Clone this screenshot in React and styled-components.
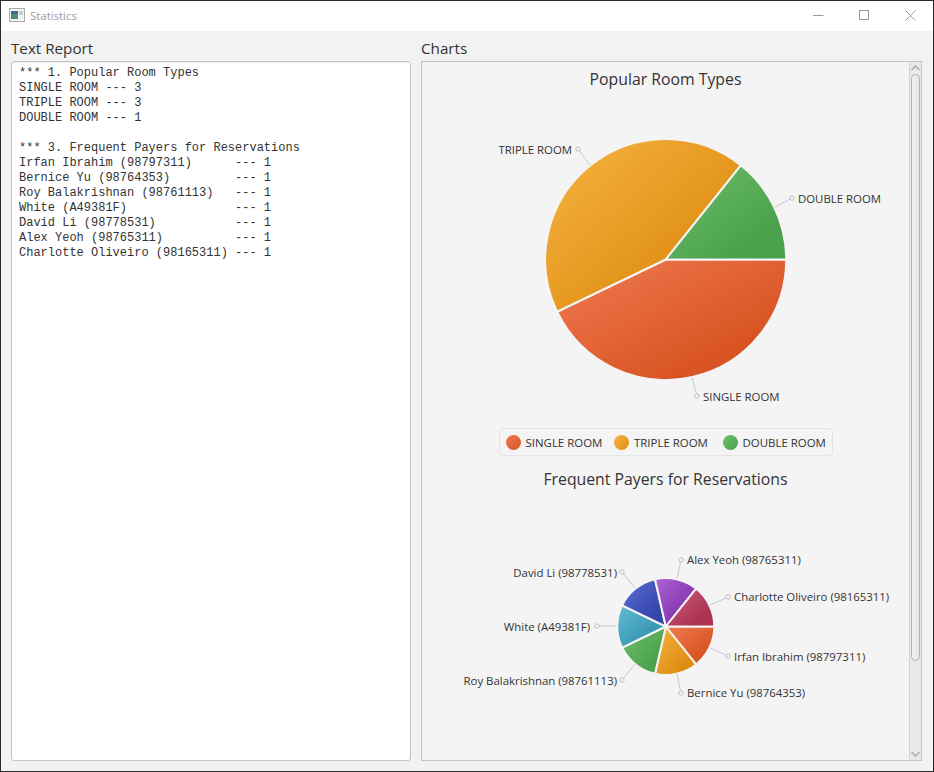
import styled, { createGlobalStyle } from 'styled-components';

const GlobalStyle = createGlobalStyle`
  html, body { margin: 0; padding: 0; background: #f4f4f4; }
  * { box-sizing: border-box; }
`;

const UI_FONT = '"Open Sans", "Noto Sans", sans-serif';

const report = `*** 1. Popular Room Types
SINGLE ROOM --- 3
TRIPLE ROOM --- 3
DOUBLE ROOM --- 1

*** 3. Frequent Payers for Reservations
Irfan Ibrahim (98797311)      --- 1
Bernice Yu (98764353)         --- 1
Roy Balakrishnan (98761113)   --- 1
White (A49381F)               --- 1
David Li (98778531)           --- 1
Alex Yeoh (98765311)          --- 1
Charlotte Oliveiro (98165311) --- 1`;

const COLORS = {
  orange: ['#f07a52', '#d95423'],
  amber: ['#f6b443', '#df8e12'],
  green: ['#6dbf6d', '#4ca24c'],
  teal: ['#62bcd6', '#3393b0'],
  blue: ['#5c70d6', '#3445ab'],
  purple: ['#ae63d6', '#8233ab'],
  crimson: ['#d2607e', '#ab3353'],
};

const roomSlices = [
  { color: 'orange', from: 0, to: 154.29 },
  { color: 'amber', from: 154.29, to: 308.57 },
  { color: 'green', from: 308.57, to: 360 },
];

const roomLabels = [
  { text: 'TRIPLE ROOM', x: 572, y: 149.5, anchor: 'end', line: [578, 149, 590, 165] },
  { text: 'DOUBLE ROOM', x: 798, y: 198.5, anchor: 'start', line: [792, 198, 775, 207] },
  { text: 'SINGLE ROOM', x: 703, y: 396.5, anchor: 'start', line: [697, 396, 692, 377] },
];

const payerSlices = ['orange', 'amber', 'green', 'teal', 'blue', 'purple', 'crimson'].map((color, i) => ({
  color,
  from: (i * 360) / 7,
  to: ((i + 1) * 360) / 7,
}));

const payerLabels = [
  { text: 'Alex Yeoh (98765311)', x: 687, y: 560, anchor: 'start', line: [681, 560, 677, 579] },
  { text: 'Charlotte Oliveiro (98165311)', x: 734, y: 597, anchor: 'start', line: [728, 597, 710, 605] },
  { text: 'Irfan Ibrahim (98797311)', x: 734, y: 657, anchor: 'start', line: [728, 656, 710, 648] },
  { text: 'Bernice Yu (98764353)', x: 687, y: 693, anchor: 'start', line: [681, 693, 677, 674] },
  { text: 'Roy Balakrishnan (98761113)', x: 617, y: 681, anchor: 'end', line: [622, 680, 635, 664] },
  { text: 'White (A49381F)', x: 590, y: 627, anchor: 'end', line: [597, 626, 616, 626] },
  { text: 'David Li (98778531)', x: 617, y: 573, anchor: 'end', line: [622, 572, 635, 588] },
];

const legend = [
  { text: 'SINGLE ROOM', color: 'orange' },
  { text: 'TRIPLE ROOM', color: 'amber' },
  { text: 'DOUBLE ROOM', color: 'green' },
];

const Window = styled.div`
  width: 934px;
  height: 772px;
  display: flex;
  flex-direction: column;
  background: #f2f2f2;
  border: 1px solid #2b2b2b;
  font-family: ${UI_FONT};
  color: #333;
  overflow: hidden;
`;

const TitleBar = styled.div`
  height: 30px;
  flex: none;
  display: flex;
  align-items: center;
  background: #fff;
  padding: 0 0 2px 8px;
`;

const TitleText = styled.span`
  margin-left: 5px;
  font-size: 11.4px;
  color: #9b9b9b;
`;

const Controls = styled.div`
  margin-left: auto;
  display: flex;
`;

const ControlButton = styled.div`
  width: 46px;
  height: 28px;
  display: flex;
  align-items: center;
  justify-content: center;
`;

const Body = styled.div`
  flex: 1;
  min-height: 0;
  display: grid;
  grid-template-columns: 400px 501px;
  gap: 10px;
  padding: 7px 11px 10px 10px;
`;

const Column = styled.div`
  display: flex;
  flex-direction: column;
  min-height: 0;
`;

const ColumnLabel = styled.div`
  height: 23px;
  flex: none;
  font-size: 15.2px;
  line-height: 21px;
  color: #333;
`;

const ReportBox = styled.pre`
  flex: 1;
  margin: 0;
  padding: 4px 7px;
  background: #fff;
  border: 1px solid #c4c4c4;
  border-radius: 3px;
  box-shadow: inset 0 1px 1px rgba(0, 0, 0, 0.08);
  font-family: "Liberation Mono", monospace;
  font-size: 12px;
  line-height: 15px;
  color: #333;
`;

const ScrollPane = styled.div`
  flex: 1;
  min-height: 0;
  display: flex;
  background: #f4f4f4;
  border: 1px solid #c2c2c2;
`;

const ChartArea = styled.div`
  flex: 1;
  min-width: 0;
  overflow: hidden;
  display: flex;
  flex-direction: column;
  align-items: center;
`;

const ChartTitle = styled.div`
  height: ${(p) => p.$height}px;
  flex: none;
  padding-top: ${(p) => p.$top}px;
  font-size: 15.8px;
  line-height: 22px;
  color: #333;
`;

const ChartSvg = styled.svg`
  display: block;
  flex: none;
  font-family: ${UI_FONT};
  font-size: 11.4px;
`;

const Legend = styled.div`
  flex: none;
  width: 334px;
  height: 28px;
  margin-top: 3px;
  display: grid;
  grid-template-columns: repeat(3, 108.5px);
  align-items: center;
  padding-left: 6px;
  background: #f4f4f4;
  border: 1px solid #e4e4e4;
  border-radius: 4px;
  font-size: 11.45px;
`;

const LegendItem = styled.div`
  display: flex;
  align-items: center;
  gap: 5px;
  white-space: nowrap;
`;

const LegendDot = styled.span`
  width: 15px;
  height: 15px;
  border-radius: 50%;
  background: linear-gradient(to bottom right, ${(p) => COLORS[p.$color][0]}, ${(p) => COLORS[p.$color][1]});
`;

const ScrollBar = styled.div`
  width: 12px;
  flex: none;
  display: flex;
  flex-direction: column;
  background: #e9e9e9;
  border-left: 1px solid #d4d4d4;
`;

const ArrowButton = styled.div`
  height: 12px;
  flex: none;
  display: flex;
  align-items: center;
  justify-content: center;
`;

const Track = styled.div`
  flex: 1;
  min-height: 0;
  padding: 0 1px;
`;

const Thumb = styled.div`
  border: 1px solid #b4b4b4;
  border-radius: 5px;
  background: linear-gradient(to right, #f2f2f2, #e6e6e6);
`;

const polar = (cx, cy, r, deg) => [
  cx + r * Math.cos((deg * Math.PI) / 180),
  cy + r * Math.sin((deg * Math.PI) / 180),
];

const slicePath = (cx, cy, r, from, to) => {
  const [x1, y1] = polar(cx, cy, r, from);
  const [x2, y2] = polar(cx, cy, r, to);
  const large = to - from > 180 ? 1 : 0;
  return `M${cx} ${cy}L${x1} ${y1}A${r} ${r} 0 ${large} 1 ${x2} ${y2}Z`;
};

const Gradients = ({ prefix }) => (
  <defs>
    {Object.entries(COLORS).map(([name, [light, dark]]) => (
      <linearGradient key={name} id={`${prefix}-${name}`} x1="0" y1="0" x2="1" y2="1">
        <stop offset="0" stopColor={light} />
        <stop offset="0.75" stopColor={dark} />
      </linearGradient>
    ))}
  </defs>
);

// viewBox is in window coordinates so the numbers read straight off the screenshot
const PieChart = ({ prefix, top, height, cx, cy, r, slices, labels }) => (
  <ChartSvg width="487" height={height} viewBox={`422 ${top} 487 ${height}`}>
    <Gradients prefix={prefix} />
    {slices.map((s) => (
      <path
        key={s.color}
        d={slicePath(cx, cy, r, s.from, s.to)}
        fill={`url(#${prefix}-${s.color})`}
        stroke="#f4f4f4"
        strokeWidth="2"
      />
    ))}
    {labels.map((l) => (
      <g key={l.text}>
        <line x1={l.line[0]} y1={l.line[1]} x2={l.line[2]} y2={l.line[3]} stroke="#c8c8c8" />
        <circle cx={l.line[0]} cy={l.line[1]} r="2.2" fill="#f4f4f4" stroke="#c0c0c0" />
        <text x={l.x} y={l.y + 4} textAnchor={l.anchor} fill="#333">{l.text}</text>
      </g>
    ))}
  </ChartSvg>
);

const Chevron = ({ up }) => (
  <svg width="9" height="6" viewBox="0 0 9 6">
    <path d={up ? 'M0.5 5L4.5 1L8.5 5' : 'M0.5 1L4.5 5L8.5 1'} fill="none" stroke="#a8a8a8" strokeWidth="1.3" />
  </svg>
);

const AppIcon = () => (
  <svg width="16" height="14" viewBox="0 0 16 14">
    <rect x="0.5" y="0.5" width="15" height="13" fill="#f2f2f2" stroke="#a9a9a9" />
    <rect x="2" y="3" width="7" height="8" fill="#4d8a7e" />
    <rect x="2" y="3" width="7" height="3" fill="#3f6d8f" />
    <rect x="10" y="3" width="4" height="4" fill="#c4ccd0" />
  </svg>
);

export default function App() {
  return (
    <>
      <GlobalStyle />
      <Window>
        <TitleBar>
          <AppIcon />
          <TitleText>Statistics</TitleText>
          <Controls>
            <ControlButton>
              <svg width="11" height="11" viewBox="0 0 11 11"><path d="M0 5.5H10.5" stroke="#9a9a9a" /></svg>
            </ControlButton>
            <ControlButton>
              <svg width="11" height="11" viewBox="0 0 11 11"><rect x="0.5" y="0.5" width="9" height="9" fill="none" stroke="#9a9a9a" /></svg>
            </ControlButton>
            <ControlButton>
              <svg width="11" height="11" viewBox="0 0 11 11"><path d="M0.5 0.5L10.5 10.5M10.5 0.5L0.5 10.5" stroke="#9a9a9a" /></svg>
            </ControlButton>
          </Controls>
        </TitleBar>
        <Body>
          <Column>
            <ColumnLabel>Text Report</ColumnLabel>
            <ReportBox>{report}</ReportBox>
          </Column>
          <Column>
            <ColumnLabel>Charts</ColumnLabel>
            <ScrollPane>
              <ChartArea>
                <ChartTitle $height={35} $top={6}>Popular Room Types</ChartTitle>
                <PieChart prefix="rooms" top={97} height={328} cx={665.7} cy={259.5} r={120.5} slices={roomSlices} labels={roomLabels} />
                <Legend>
                  {legend.map((l) => (
                    <LegendItem key={l.text}>
                      <LegendDot $color={l.color} />
                      {l.text}
                    </LegendItem>
                  ))}
                </Legend>
                <ChartTitle $height={41} $top={12}>Frequent Payers for Reservations</ChartTitle>
                <PieChart prefix="payers" top={497} height={263} cx={665.8} cy={626.5} r={48.5} slices={payerSlices} labels={payerLabels} />
              </ChartArea>
              <ScrollBar>
                <ArrowButton><Chevron up /></ArrowButton>
                <Track><Thumb style={{ height: 587 }} /></Track>
                <ArrowButton><Chevron /></ArrowButton>
              </ScrollBar>
            </ScrollPane>
          </Column>
        </Body>
      </Window>
    </>
  );
}
